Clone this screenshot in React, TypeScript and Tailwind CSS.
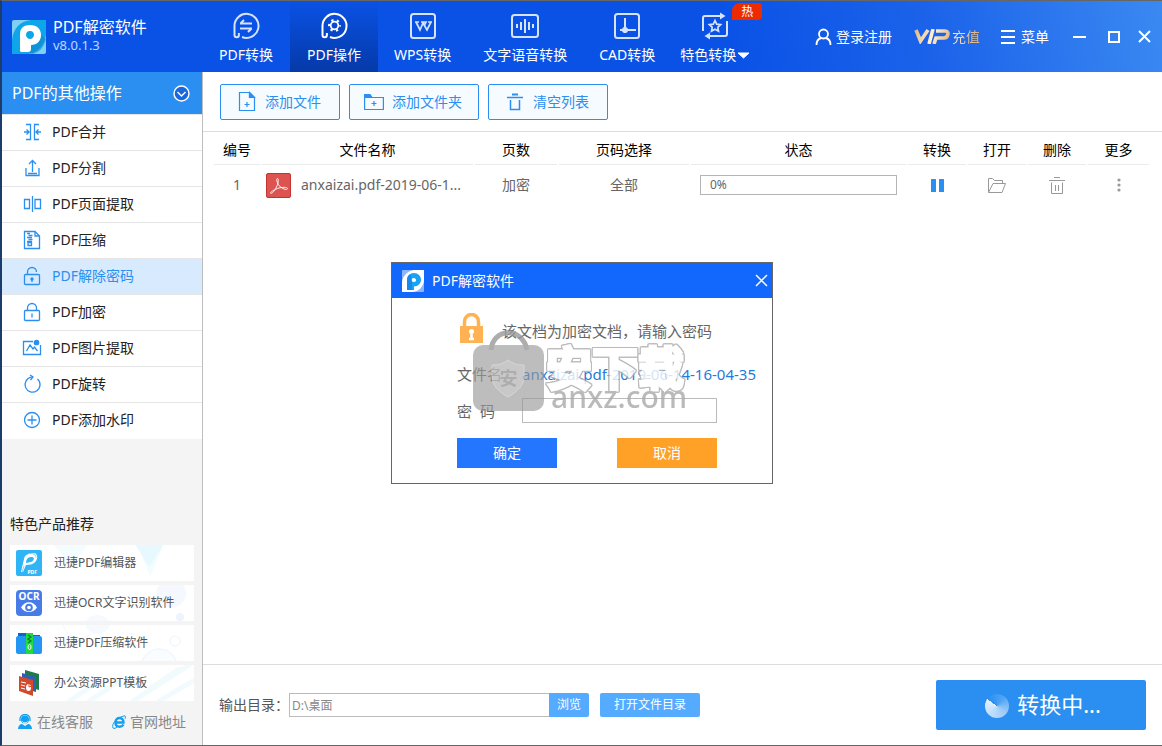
import { ReactNode, useState } from "react"
import clsx from "clsx"

interface IconProps {
    className?: string
}

interface MenuItem {
    label: string
    icon: ReactNode
}

const TabIcon = ({ children }: { children: ReactNode }) => (
    <svg width="30" height="30" viewBox="0 0 30 30" fill="none" stroke="currentColor" strokeWidth="2">
        {children}
    </svg>
)

const LineIcon = ({ children }: { children: ReactNode }) => (
    <svg width="20" height="20" viewBox="0 0 20 20" fill="none" stroke="#2a8ff0" strokeWidth="1.3" className="shrink-0">
        {children}
    </svg>
)

const AppLogo = ({ className }: IconProps) => (
    <svg viewBox="0 0 34 34" className={className}>
        <rect width="34" height="34" rx="2" fill="#7fd0f5" />
        <path d="M34 0v15C32 25 27 32 17 34H0V20C1 9 8 1 19 0z" fill="#0fa5e9" />
        <path d="M16 31l4 3c7-1 12-7 14-15l-6-5z" fill="#0989cc" opacity=".6" />
        <path d="M8 31V14c0-6 4-9 10-9 7 0 11 4 11 10 0 6-4 10-10 10v4c0 2-1 3-3 3h-7zM18 11c-3 0-4 2-4 4s2 4 4 4 4-2 4-4-1-4-4-4z" fill="#fff" fillRule="evenodd" />
    </svg>
)

const DialogLogo = ({ className }: IconProps) => (
    <svg viewBox="0 0 22 22" className={className}>
        <rect width="22" height="22" rx="1" fill="#8fb4fb" />
        <path d="M22 0v11c-1 6-5 10-11 11H0V12C1 5 6 1 12 0z" fill="#fff" />
        <path d="M5 20V10c0-4 3-7 7-7s7 3 7 6.500c0 4-3 7-7 7V20zM12 8c-2 0-2.500 1-2.500 2s1 2 2.500 2 2-1 2-2-1-2-2-2z" fill="#1aa3f5" fillRule="evenodd" />
        <path d="M5 20V10c0-3 1-5 3-6l2 6v10z" fill="#1270e8" opacity=".5" />
    </svg>
)

const tabs: MenuItem[] = [
    {
        label: "PDF转换",
        icon: (
            <TabIcon>
                <path d="M3.500 15A12 12 0 1 1 11 26M3.500 14v10a2.200 2.200 0 0 0 4.400 0v-2" />
                <path d="M9 12.500h12M9.500 12.500L13 9M21 17.500H9M20.500 17.500L17 21" />
            </TabIcon>
        ),
    },
    {
        label: "PDF操作",
        icon: (
            <TabIcon>
                <path d="M3.500 15A12 12 0 1 1 11 26M3.500 14v10a2.200 2.200 0 0 0 4.400 0v-2" />
                <circle cx="15.500" cy="14.500" r="3.800" strokeWidth="1.800" />
                <circle cx="15.500" cy="14.500" r="5.400" strokeWidth="2.200" strokeDasharray="2.200 3.455" strokeDashoffset="1.100" />
            </TabIcon>
        ),
    },
    {
        label: "WPS转换",
        icon: (
            <TabIcon>
                <rect x="3" y="3" width="24" height="24" rx="2.500" />
                <path d="M7 11h4M8 11l4 8 3-7 4 7 4-8M13 11h5l-1.500 3M20 11h4" strokeWidth="1.700" />
            </TabIcon>
        ),
    },
    {
        label: "文字语音转换",
        icon: (
            <TabIcon>
                <rect x="2" y="4" width="26" height="22" rx="2.500" />
                <path d="M7 13v4M11 11v8M15 8v14M19 11v8M23 13v4" />
            </TabIcon>
        ),
    },
    {
        label: "CAD转换",
        icon: (
            <TabIcon>
                <rect x="3" y="3" width="24" height="24" rx="2.500" />
                <path d="M13 7v15M8 19h16" />
                <circle cx="13" cy="19" r="3" fill="currentColor" stroke="none" />
            </TabIcon>
        ),
    },
    {
        label: "特色转换",
        icon: (
            <TabIcon>
                <path d="M3 20V7c0-1 1-2 2-2h18M27 10v13c0 1-1 2-2 2H7" />
                <path d="M20 1.500l5.500 3.500L20 8.500zM10 21.500L4.500 25l5.500 3.500z" fill="currentColor" stroke="none" />
                <path d="M15 9.500l1.700 3.600 3.900.5-2.800 2.700.7 3.900-3.500-1.900-3.500 1.900.7-3.900-2.800-2.700 3.900-.5z" strokeWidth="1.700" />
            </TabIcon>
        ),
    },
]

const menus: MenuItem[] = [
    {
        label: "PDF合并",
        icon: (
            <LineIcon>
                <path d="M4 2.500h4.500v15H4M17 2.500h-4.500v15H17M2 10h5M4.500 7.500L7 10l-2.500 2.500M19 10h-5M16.500 7.500L14 10l2.500 2.500" />
            </LineIcon>
        ),
    },
    {
        label: "PDF分割",
        icon: (
            <LineIcon>
                <path d="M4 10v7.500h13V10M10.500 14V2.500M7 6l3.500-3.500L14 6M6 15.500h9" />
            </LineIcon>
        ),
    },
    {
        label: "PDF页面提取",
        icon: (
            <LineIcon>
                <path d="M2.500 5.500h5v9h-5zM13 5.500h5.500v9H13zM10.500 2v16" />
            </LineIcon>
        ),
    },
    {
        label: "PDF压缩",
        icon: (
            <LineIcon>
                <path d="M2.500 1.500H13l4.500 4.500v12.500h-15zM13 1.500V6h4.500" />
                <path d="M5 3.500h3M6.500 5.500h4M5 7.500h5M6.500 9.500h4M5 11.500h5" strokeWidth="1.500" />
                <path d="M6 12.500h3.500v3H6z" />
            </LineIcon>
        ),
    },
    {
        label: "PDF解除密码",
        icon: (
            <LineIcon>
                <rect x="2.500" y="8.500" width="15" height="10" rx="1" />
                <path d="M5.500 8.500V6a4.500 4.500 0 0 1 9 0M10 13v3" />
                <circle cx="10" cy="13" r="1" fill="#2a8ff0" />
            </LineIcon>
        ),
    },
    {
        label: "PDF加密",
        icon: (
            <LineIcon>
                <rect x="2.500" y="8.500" width="15" height="10" rx="1" />
                <path d="M5.500 8.500V6a4.500 4.500 0 0 1 9 0v2.500M10 11.500v4" />
            </LineIcon>
        ),
    },
    {
        label: "PDF图片提取",
        icon: (
            <LineIcon>
                <path d="M11 3.500H1.500v13h17V7M4.500 13l3.500-6 3 4 1.500-2 3 4" />
                <circle cx="14.500" cy="4.500" r="2.200" fill="#2a8ff0" />
            </LineIcon>
        ),
    },
    {
        label: "PDF旋转",
        icon: (
            <LineIcon>
                <path d="M15.500 5A7.500 7.500 0 1 1 9.500 3.200M8 1l3 2-2.500 3" />
            </LineIcon>
        ),
    },
    {
        label: "PDF添加水印",
        icon: (
            <LineIcon>
                <circle cx="10" cy="10" r="7.500" />
                <path d="M10 5.500v9M5.500 10h9" />
            </LineIcon>
        ),
    },
]

const products: MenuItem[] = [
    {
        label: "迅捷PDF编辑器",
        icon: (
            <svg width="26" height="26" viewBox="0 0 26 26">
                <rect width="26" height="26" rx="2" fill="#2fb5f5" />
                <path d="M5 22L8 9c1-5 5-6 9-6 5 0 5 5 3 8s-6 4-10 4l-3 7z" fill="#fff" />
                <path d="M10 13c0-5 3-6 6-6s2 4-1 5z" fill="#2fb5f5" />
                <path d="M10 4.500c5-2 10-1 10 3M8 16L6 22" fill="none" stroke="#2fb5f5" strokeWidth=".6" />
                <text x="11.500" y="23.500" fontSize="5" fontWeight="bold" fill="#fff">PDF</text>
            </svg>
        ),
    },
    {
        label: "迅捷OCR文字识别软件",
        icon: (
            <svg width="26" height="26" viewBox="0 0 26 26">
                <rect width="26" height="26" rx="4" fill="#477ce8" />
                <text x="13" y="10" fontSize="10" fontWeight="bold" fill="#fff" textAnchor="middle">OCR</text>
                <path d="M5 17.500c4-7 12-7 16 0-4 6-12 6-16 0z" fill="#fff" />
                <circle cx="13" cy="17.500" r="3.800" fill="#477ce8" />
                <circle cx="13" cy="17.500" r="1.800" fill="#fff" />
            </svg>
        ),
    },
    {
        label: "迅捷PDF压缩软件",
        icon: (
            <svg width="26" height="26" viewBox="0 0 26 26">
                <path d="M2 3h9l2 2h11v18H2z" fill="#1565c8" />
                <path d="M0 8c0-1 1-2 2-2h22c1 0 2 1 2 2v14c0 1-1 2-2 2H2c-1 0-2-1-2-2z" fill="#2196f3" />
                <path d="M10 3h7v21h-7z" fill="#1edc3c" />
                <path d="M12 5l3 2-3 2 3 2-3 2" fill="none" stroke="#087a32" strokeWidth="1.200" />
                <ellipse cx="13.500" cy="17" rx="1.500" ry="2.500" fill="none" stroke="#fff" />
            </svg>
        ),
    },
    {
        label: "办公资源PPT模板",
        icon: (
            <svg width="26" height="26" viewBox="0 0 26 26">
                <path d="M9 0l14 4v16L9 16z" fill="#1f7a4a" />
                <path d="M6 3l14 4v15L6 18z" fill="#2f5fb0" />
                <path d="M3 6l14 4v16L3 21z" fill="#d2492a" />
                <path d="M5 12l5 1M5 15l4 1M5 18l4 1" stroke="#fff" />
                <ellipse cx="12.500" cy="17.500" rx="2.500" ry="3.500" fill="#fff" />
                <path d="M13 13v4l3-1" fill="none" stroke="#d2492a" />
            </svg>
        ),
    },
]

// faint shapes drifting behind the product cards
const cardDecor: ReactNode[] = [
    <>
        <path d="M44 0h34L62 20zM128 0h26l-13 32zM112 36l30-36" fill="#f3fcff" />
        <path d="M126 0h28l-14 22z" fill="#e8f8ff" />
    </>,
    <>
        <circle cx="162" cy="8" r="15" fill="#f5f9ff" />
        <circle cx="171" cy="32" r="4" fill="#edf4ff" />
        <circle cx="88" cy="44" r="14" fill="#f6faff" />
    </>,
    <>
        <circle cx="70" cy="-4" r="17" fill="none" stroke="#eef7ff" />
        <circle cx="166" cy="16" r="5" fill="none" stroke="#e9f3fd" />
        <circle cx="150" cy="42" r="18" fill="#fafdff" stroke="#e9f3fd" />
        <circle cx="88" cy="-4" r="13" fill="#f6faff" />
    </>,
    <>
        <path d="M60 36l30-20M80 36l30-20M140 24l30-20M124 36l56-36M150 36l34-20" stroke="#f1fbfe" strokeWidth="5" strokeLinecap="round" />
    </>,
]

const Header = () => {
    const [active, setActive] = useState(1)

    return (
        <header className="flex h-[71px] shrink-0 bg-[linear-gradient(78deg,#0a52e6_0%,#0a52e6_62%,#1c63ea_80%,#3a89f2_100%)] text-white">
            <div className="flex w-[200px] shrink-0 items-center gap-[7px] pl-[10px]">
                <AppLogo className="h-[34px] w-[34px]" />
                <div className="pb-1">
                    <h1 className="text-base leading-5">PDF解密软件</h1>
                    <p className="text-[13px] leading-4 text-blue-200">v8.0.1.3</p>
                </div>
            </div>
            <nav className="flex">
                {tabs.map((tab, index) => (
                    <button
                        key={tab.label}
                        type="button"
                        onClick={() => setActive(index)}
                        className={clsx(
                            "relative flex min-w-[88px] flex-col items-center gap-1 pt-[10px]",
                            index === 5 ? "px-2" : "px-4",
                            active === index && "bg-linear-to-b from-[#0a52e6] to-[#053aa8]"
                        )}
                    >
                        <span className={active === index ? "text-white" : "text-[#d5e3ff]"}>{tab.icon}</span>
                        <span className="flex items-center gap-px text-sm leading-5">
                            {tab.label}
                            {index === 5 && (
                                <svg width="13" height="7" viewBox="0 0 13 7"><path d="M1 1h11L6.500 6z" fill="#fff" stroke="#fff" /></svg>
                            )}
                        </span>
                        {index === 5 && (
                            <span className="absolute top-[2px] left-[61px] h-[17px] w-[30px] rounded-tl-lg rounded-r bg-[#ee2b00] text-center text-xs leading-[17px]">热</span>
                        )}
                    </button>
                ))}
            </nav>
            <div className="ml-auto flex items-center pr-[11px] text-sm leading-5">
                <button type="button" className="flex items-center gap-1">
                    <svg width="17" height="18" viewBox="0 0 17 18" fill="none" stroke="currentColor" strokeWidth="1.800">
                        <circle cx="8.500" cy="6" r="4.500" />
                        <path d="M1.500 17c0-4 2-6.500 5-7M15.500 17c0-4-2-6.500-5-7" />
                    </svg>
                    登录注册
                </button>
                <button type="button" className="ml-[22px] flex items-center gap-[2px]">
                    <svg width="36" height="15" viewBox="0 0 36 15" fill="none" strokeWidth="3.600">
                        <defs>
                            <linearGradient id="vip" x1="0" y1="0" x2="36" y2="15" gradientUnits="userSpaceOnUse">
                                <stop stopColor="#e0b47c" />
                                <stop offset=".5" stopColor="#fff0d8" />
                                <stop offset="1" stopColor="#dcae74" />
                            </linearGradient>
                        </defs>
                        <path d="M2 1l4.500 11L14 1M19 0l-4 15M22 2h9c5 0 3 7-1 7h-8l-2 6" stroke="url(#vip)" />
                    </svg>
                    <span className="bg-linear-to-r from-[#fbe8cd] to-[#d9ae7a] bg-clip-text text-transparent">充值</span>
                </button>
                <button type="button" className="ml-[21px] flex items-center gap-[6px]">
                    <svg width="14" height="14" viewBox="0 0 14 14"><path d="M0 1h14M0 7h14M0 13h14" stroke="#fff" strokeWidth="2" /></svg>
                    菜单
                </button>
                <button type="button" aria-label="最小化" className="ml-6">
                    <svg width="13" height="13" viewBox="0 0 13 13"><path d="M0 7h13" stroke="#fff" strokeWidth="2" /></svg>
                </button>
                <button type="button" aria-label="最大化" className="ml-[22px]">
                    <svg width="12" height="12" viewBox="0 0 12 12"><path d="M1 1h10v10H1z" fill="none" stroke="#fff" strokeWidth="2" /></svg>
                </button>
                <button type="button" aria-label="关闭" className="ml-[18px]">
                    <svg width="13" height="13" viewBox="0 0 13 13"><path d="M1 1l11 11M12 1L1 12" stroke="#fff" strokeWidth="2" /></svg>
                </button>
            </div>
        </header>
    )
}

const Sidebar = () => {
    const [active, setActive] = useState(4)

    return (
        <aside className="flex w-[201px] shrink-0 flex-col border-r border-[#bdbdbd] bg-[#f4f4f4]">
            <button type="button" className="flex h-[42px] items-center justify-between bg-[#2a8ff0] pr-[12px] pl-[10px] text-white">
                <span className="text-base leading-5">PDF的其他操作</span>
                <svg width="17" height="17" viewBox="0 0 17 17" fill="none" stroke="#fff" strokeWidth="1.400">
                    <circle cx="8.500" cy="8.500" r="7.500" fill="#1a66dc" />
                    <path d="M4.500 7l4 4 4-4" />
                </svg>
            </button>
            <ul className="border-t border-[#e5e5e5] bg-white">
                {menus.map((menu, index) => (
                    <li key={menu.label} className="border-b border-[#e5e5e5] last:border-white">
                        <button
                            type="button"
                            onClick={() => setActive(index)}
                            className={clsx(
                                "flex h-[35px] w-full items-center gap-[10px] pb-px pl-5 text-sm leading-5",
                                active === index ? "bg-[#d8eafd] text-[#2a8ff0]" : "text-[#222]"
                            )}
                        >
                            {menu.icon}
                            {menu.label}
                        </button>
                    </li>
                ))}
            </ul>
            <section className="mt-auto px-2">
                <h2 className="mb-[11px] text-sm leading-5 text-[#222]">特色产品推荐</h2>
                <ul className="flex flex-col gap-1">
                    {products.map((product, index) => (
                        <li key={product.label} className="relative h-9 bg-white">
                            <svg viewBox="0 0 185 36" className="absolute inset-0 h-full w-full overflow-hidden" fill="none">{cardDecor[index]}</svg>
                            <a href="#" className="relative flex h-full items-center gap-3 pl-[6px] text-xs leading-4 text-[#555]">
                                {product.icon}
                                {product.label}
                            </a>
                        </li>
                    ))}
                </ul>
            </section>
            <div className="flex h-11 items-center justify-between pr-4 pb-[3px] pl-4 text-sm leading-5 text-[#888]">
                <a href="#" className="flex items-center gap-[5px]">
                    <svg width="14" height="15" viewBox="0 0 14 15">
                        <circle cx="7" cy="5.500" r="4" fill="#12a0f0" />
                        <path d="M2 7V5a5 4.500 0 0 1 10 0v2" fill="none" stroke="#12a0f0" strokeWidth="1.300" />
                        <path d="M0 15c0-3 2-5 4-5l3 2 3-2c2 0 4 2 4 5z" fill="#12a0f0" />
                        <path d="M4.500 7.500c1 2 4 2 5 0" stroke="#fff" fill="none" />
                    </svg>
                    在线客服
                </a>
                <a href="#" className="flex items-center gap-1">
                    <svg width="14" height="14" viewBox="0 0 14 14" fill="none" stroke="#12a0f0">
                        <path d="M3.500 7.500h8c0-6-8-6-8 0 0 5 6 5.500 8 2" strokeWidth="2.400" />
                        <path d="M1 13C-1 9 5 2 13 .8c1 .5.500 2 0 3M1 13c1 1 3 0 4-.8" />
                    </svg>
                    官网地址
                </a>
            </div>
        </aside>
    )
}

const toolButton = "flex h-9 items-center justify-center gap-2 rounded-xs border border-[#2a8ff0] bg-[#f6fbff] pr-[2px] text-sm leading-5 text-[#2a8ff0]"

const Toolbar = () => (
    <div className="flex h-[60px] shrink-0 items-center gap-[9px] border-b border-[#dcdcdc] pl-[17px]">
        <button type="button" className={clsx(toolButton, "w-[120px]")}>
            <svg width="20" height="22" viewBox="0 0 20 22" fill="none" stroke="#2a8ff0" strokeWidth="1.200">
                <path d="M2.500 1.500h10l5 5v13h-15zM12.500 1.500v5h5M7.500 13.500h5M10 11v5" />
                <path d="M12.500 1.500l5 5h-5z" fill="#2a8ff0" />
            </svg>
            添加文件
        </button>
        <button type="button" className={clsx(toolButton, "w-[130px]")}>
            <svg width="20" height="20" viewBox="0 0 20 20" fill="none" stroke="#2a8ff0" strokeWidth="1.200">
                <path d="M.6 5.500h18.800v12H.6zM7.500 11.500h5M10 9v5" />
                <path d="M.6 2.500H6l2 3H.6z" fill="#2a8ff0" />
            </svg>
            添加文件夹
        </button>
        <button type="button" className={clsx(toolButton, "w-[120px]")}>
            <svg width="20" height="20" viewBox="0 0 20 20" fill="none" stroke="#2a8ff0" strokeWidth="1.500">
                <path d="M2 5.500h16M5.500 8v9.500h9V8" />
                <path d="M7 2.500h6" strokeWidth="2" />
            </svg>
            清空列表
        </button>
    </div>
)

const columns = [
    { label: "编号", width: "w-[46px]" },
    { label: "文件名称", width: "w-[211px]" },
    { label: "页数", width: "w-[82px]" },
    { label: "页码选择", width: "w-[130px]" },
    { label: "状态", width: "" },
    { label: "转换", width: "w-[58px]" },
    { label: "打开", width: "w-[58px]" },
    { label: "删除", width: "w-[58px]" },
    { label: "更多", width: "w-[61px]" },
]

const FileTable = () => (
    <div className="grow pr-[11px] pl-[9px]">
        <table className="w-full table-fixed border-separate border-spacing-x-[2px] border-spacing-y-0 text-center text-sm leading-5 text-[#666]">
            <thead>
                <tr className="h-[33px] text-black">
                    {columns.map((col) => (
                        <th key={col.label} className={clsx("border-b border-[#ebebeb] pt-1 font-normal", col.width)}>{col.label}</th>
                    ))}
                </tr>
            </thead>
            <tbody>
                <tr className="h-10">
                    <td>1</td>
                    <td>
                        <div className="flex items-center gap-[10px] pl-1">
                            <svg width="25" height="25" viewBox="0 0 25 25" className="shrink-0">
                                <rect x=".5" y=".5" width="24" height="24" rx="1.500" fill="#dc5350" stroke="#c23431" />
                                <path d="M11.500 5.500c-2 0 0 6 3 8.500 4 3 7 3 7 1.500s-6-1.500-10 0-7 3.500-7 4.500 3 0 5.500-5 3-9.500 1.500-9.500z" fill="none" stroke="#fff" strokeWidth=".9" />
                            </svg>
                            <span className="truncate">anxaizai.pdf-2019-06-1...</span>
                        </div>
                    </td>
                    <td>加密</td>
                    <td>全部</td>
                    <td className="px-[9px]">
                        <div role="progressbar" aria-valuenow={0} className="h-5 border border-[#b5b5b5] pl-[9px] text-left text-xs leading-[18px]">0%</div>
                    </td>
                    <td>
                        <button type="button" aria-label="暂停" className="block mx-auto">
                            <svg width="13" height="13" viewBox="0 0 13 13" fill="#2a8ff0"><rect width="5" height="13" rx=".5" /><rect x="8" width="5" height="13" rx=".5" /></svg>
                        </button>
                    </td>
                    <td>
                        <button type="button" aria-label="打开" className="block mx-auto">
                            <svg width="18" height="15" viewBox="0 0 18 15" fill="none" stroke="#999"><path d="M.5 14V.5h4l2 2h8V5M.5 14.500L5 5.500h12.500L14 14.500z" /></svg>
                        </button>
                    </td>
                    <td>
                        <button type="button" aria-label="删除" className="block mx-auto">
                            <svg width="16" height="17" viewBox="0 0 16 17" fill="none" stroke="#999"><path d="M0 3.500h16M5 .5h6M2.500 5.500v11h11v-11M6.500 8v6M9.500 8v6" /></svg>
                        </button>
                    </td>
                    <td>
                        <button type="button" aria-label="更多" className="block mx-auto">
                            <svg width="4" height="14" viewBox="0 0 4 14" fill="#999"><circle cx="2" cy="2" r="1.600" /><circle cx="2" cy="7" r="1.600" /><circle cx="2" cy="12" r="1.600" /></svg>
                        </button>
                    </td>
                </tr>
            </tbody>
        </table>
    </div>
)

const OutputBar = () => (
    <footer className="flex h-[81px] shrink-0 items-center border-t border-[#dcdcdc] pr-[16px] pl-4 text-sm leading-5">
        <label htmlFor="output" className="w-[70px] text-[#555]">输出目录：</label>
        <input id="output" defaultValue="D:\桌面" className="h-6 w-[260px] border border-r-0 border-[#bbb] px-[2px] text-xs text-[#888] outline-none" />
        <button type="button" className="h-6 w-10 rounded-r-xs bg-[#54abff] text-xs text-white">浏览</button>
        <button type="button" className="ml-[11px] h-6 w-[100px] rounded-xs bg-[#54abff] text-xs text-white">打开文件目录</button>
        <button type="button" className="ml-auto flex h-[50px] w-[210px] items-center justify-center gap-2 rounded-xs bg-[#2a8ff0] pl-1 text-[22px] leading-8 text-white">
            <span className="mt-[2px] h-6 w-6 rounded-full bg-[conic-gradient(from_305deg,#2a8ff0,#4fa3f3_25%,#9ccbf8_50%,#e2f0fd_100%)]" />
            <span className="pb-[2px]">转换中...</span>
        </button>
    </footer>
)

const Watermark = () => (
    <div className="pointer-events-none absolute top-[67px] left-[81px] flex text-[#aaa] opacity-80">
        <svg width="72" height="82" viewBox="0 0 72 82">
            <path d="M18 20C20 -3 50 -3 54 20" fill="none" stroke="#999" strokeWidth="5" />
            <rect y="15" width="71" height="66" rx="10" fill="#999" opacity=".8" />
            <path d="M35 30c5 4 10 5 16 5v11c0 9-6 15-16 21-10-6-16-12-16-21V35c6 0 11-1 16-5z" fill="#bbb" stroke="#ccc" />
            <text x="35.500" y="55" fontSize="18" fontWeight="bold" textAnchor="middle" fill="#999">安</text>
        </svg>
        <div className="pl-[1px]">
            <div className="mt-[15px] h-9 text-[46px] leading-11 font-bold text-white [-webkit-text-stroke:3px_white] drop-shadow-[1px_1px_0_#aaa] filter-[drop-shadow(1px_0_0_#aaa)_drop-shadow(-1px_0_0_#aaa)_drop-shadow(0_1px_0_#aaa)_drop-shadow(0_-1px_0_#aaa)]">安下载</div>
            <div className="relative pl-[5px] text-[30px] leading-8 font-medium">anxz.com</div>
        </div>
    </div>
)

const PasswordDialog = () => {
    const [password, setPassword] = useState("")

    return (
        <div role="dialog" aria-label="PDF解密软件" className="relative w-[382px] border border-[#666] bg-white">
            <div className="flex h-[35px] items-center bg-[#1268fc] pr-1 pl-[10px] text-white">
                <DialogLogo className="h-[22px] w-[22px]" />
                <h2 className="ml-2 text-sm leading-5">PDF解密软件</h2>
                <button type="button" aria-label="关闭" className="ml-auto">
                    <svg width="13" height="13" viewBox="0 0 13 13"><path d="M1 1l11 11M12 1L1 12" stroke="#fff" strokeWidth="1.500" /></svg>
                </button>
            </div>
            <div className="pt-[15px] pr-[55px] pb-[15px] pl-[65px] text-[15px] leading-6 text-[#666]">
                <div className="flex h-9 items-center gap-[19px] pl-[3px]">
                    <svg width="23" height="30" viewBox="0 0 23 30" className="mb-[6px] shrink-0">
                        <path d="M4.500 14V8.500a7 7 0 0 1 14 0V14" fill="none" stroke="#ffb254" strokeWidth="3.500" />
                        <path d="M0 13h23v17H0z" fill="#ffb254" />
                        <circle cx="11.500" cy="18.500" r="2.500" fill="#fff" />
                        <path d="M11.500 18v9M9 26h5" stroke="#fff" strokeWidth="2.500" />
                    </svg>
                    <p className="whitespace-nowrap">该文档为加密文档，请输入密码</p>
                </div>
                <div className="mt-[13px] flex h-6">
                    <span className="w-[65px] shrink-0">文件名</span>
                    <span className="w-[241px] shrink-0 overflow-hidden whitespace-nowrap text-[#1f7bdc]">anxaizai.pdf-2019-06-14-16-04-35</span>
                </div>
                <div className="mt-3 flex h-[25px] items-center">
                    <label htmlFor="password" className="flex w-[65px] shrink-0 gap-2"><span>密</span><span>码</span></label>
                    <input
                        id="password"
                        type="password"
                        value={password}
                        onChange={(e) => setPassword(e.target.value)}
                        className="h-full w-full border border-[#bbb] px-1 outline-none"
                    />
                </div>
                <div className="mt-[15px] flex justify-between text-sm text-white">
                    <button type="button" className="h-[30px] w-[100px] bg-[#2576ff]">确定</button>
                    <button type="button" className="h-[30px] w-[100px] bg-[#ffa126]">取消</button>
                </div>
            </div>
            <Watermark />
        </div>
    )
}

export default function App() {
    return (
        <div className="relative flex min-h-screen flex-col border-t border-b border-l-2 border-t-[#666] border-b-[#666] border-l-[#1c3c6c] bg-white font-['Noto_Sans','Noto_Sans_CJK_SC',sans-serif]">
            <Header />
            <div className="flex grow">
                <Sidebar />
                <main className="flex min-w-0 grow flex-col">
                    <Toolbar />
                    <FileTable />
                    <OutputBar />
                </main>
            </div>
            {/* modal layer */}
            <div className="absolute inset-0 flex items-center justify-center">
                <PasswordDialog />
            </div>
        </div>
    )
}
